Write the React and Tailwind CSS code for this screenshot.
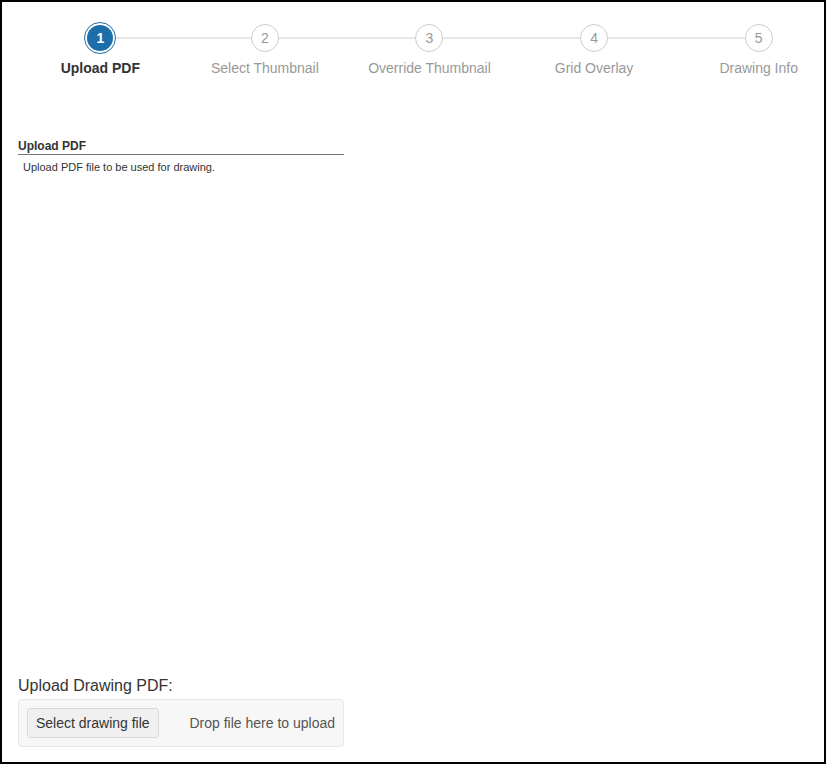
import React from "react";

const steps = ["Upload PDF", "Select Thumbnail", "Override Thumbnail", "Grid Overlay", "Drawing Info"];

export default function App() {
  return (
    <div
      className="w-[826px] h-[764px] border-2 border-black bg-white overflow-hidden flex flex-col"
      style={{ fontFamily: '"Liberation Sans", Arial, sans-serif' }}
    >
      <div className="flex pt-[20px] pl-[16px] shrink-0">
        {steps.map((label, i) => (
          <div key={label} className="relative w-[164.6px] shrink-0 flex flex-col items-center">
            {i < steps.length - 1 && (
              <div className="absolute top-[15px] left-1/2 w-[164.6px] h-[2px] bg-[#e6e6e6]" />
            )}
            <div className="relative h-8 flex items-center justify-center">
              {i === 0 ? (
                <div className="w-8 h-8 rounded-full border-[1.5px] border-[#1d6ea6] bg-white p-[2px]">
                  <div className="w-full h-full rounded-full bg-[#1b6ea7] flex items-center justify-center text-white text-[14px] font-bold leading-none">
                    1
                  </div>
                </div>
              ) : (
                <div className="w-7 h-7 rounded-full border border-[#cccccc] bg-white flex items-center justify-center text-[#999999] text-[14px] leading-none">
                  {i + 1}
                </div>
              )}
            </div>
            <div
              className={
                "mt-[4px] text-[14px] leading-5 whitespace-nowrap " +
                (i === 0 ? "font-bold text-[#333333]" : "text-[#999999]")
              }
            >
              {label}
            </div>
          </div>
        ))}
      </div>

      <div className="flex-1 flex flex-col pl-[16px] w-[342px]">
        <div className="mt-[61px] text-[12px] leading-[15px] font-bold text-[#333333] border-b border-[#777777]">
          Upload PDF
        </div>
        <div className="mt-[6px] pl-[5px] text-[11px] leading-[13px] text-[#333333]">
          Upload PDF file to be used for drawing.
        </div>
        <div className="flex-1" />
        <div className="text-[16px] leading-5 text-[#333333]">Upload Drawing PDF:</div>
        <div className="mt-[3px] mb-[15px] h-[48px] border border-[#e6e6e6] bg-[#f7f7f7] rounded-[4px] px-[8px] flex items-center justify-between">
          <div className="h-[30px] px-[8px] flex items-center border border-[#d9d9d9] bg-[#f0f0f0] rounded-[3px] text-[14px] text-[#333333]">
            Select drawing file
          </div>
          <div className="text-[14px] text-[#555555]">Drop file here to upload</div>
        </div>
      </div>
    </div>
  );
}
